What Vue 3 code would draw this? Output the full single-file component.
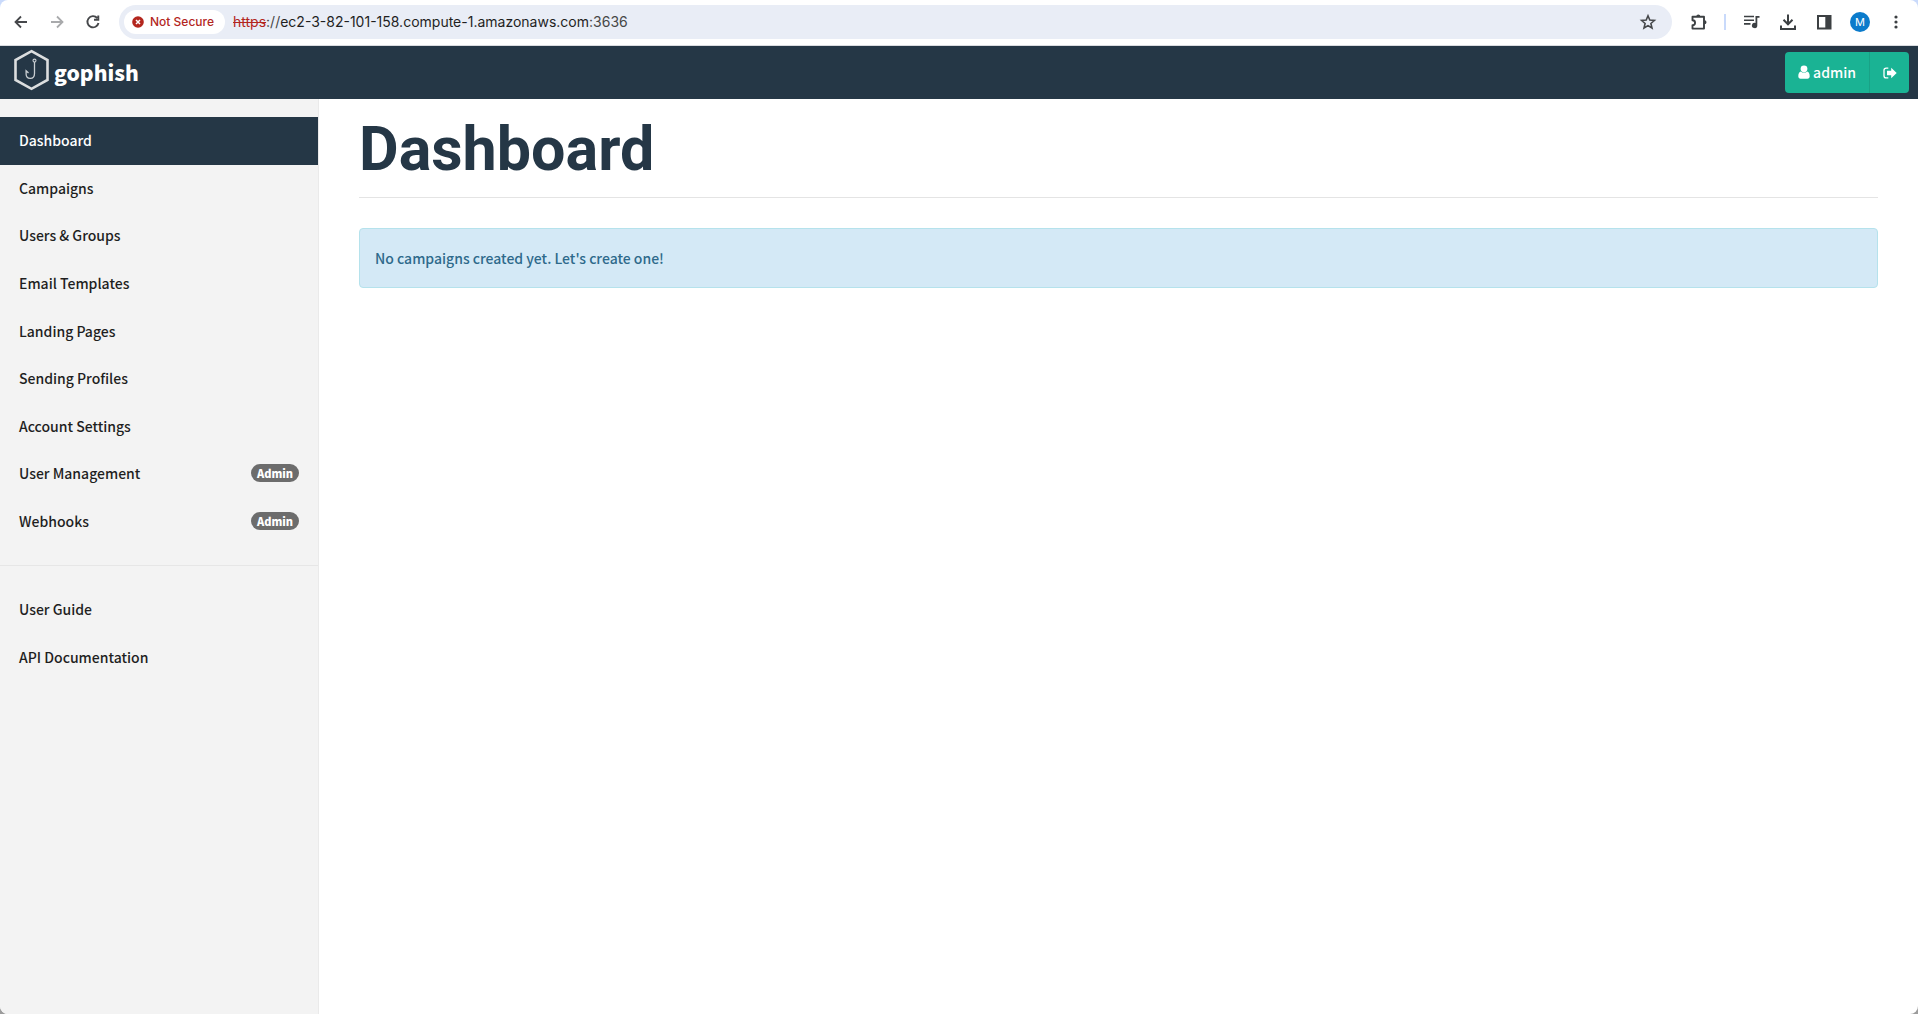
<script setup>
const mainLinks = [
  { label: 'Dashboard', active: true },
  { label: 'Campaigns' },
  { label: 'Users & Groups' },
  { label: 'Email Templates' },
  { label: 'Landing Pages' },
  { label: 'Sending Profiles' },
  { label: 'Account Settings' },
  { label: 'User Management', badge: 'Admin' },
  { label: 'Webhooks', badge: 'Admin' },
]
const helpLinks = ['User Guide', 'API Documentation']
</script>

<template>
  <div class="window">
    <header class="toolbar">
      <div class="nav-buttons">
        <button class="tool" type="button" aria-label="Back">
          <svg width="24" height="24" viewBox="0 0 24 24" fill="none" stroke="#46484b" stroke-width="1.8"><path d="M18 12H7M12 6.5L6.5 12L12 17.500" /></svg>
        </button>
        <button class="tool" type="button" aria-label="Forward">
          <svg width="24" height="24" viewBox="0 0 24 24" fill="none" stroke="#a9aaac" stroke-width="1.800"><path d="M6 12H17M12 6.500L17.500 12L12 17.500" /></svg>
        </button>
        <button class="tool" type="button" aria-label="Reload">
          <svg width="24" height="24" viewBox="0 0 24 24" fill="none" stroke="#46484b" stroke-width="1.900"><path d="M16.200 8A5.600 5.600 0 1 0 17.500 13M17.300 5.500V9.800H13" /></svg>
        </button>
      </div>
      <div class="omnibox">
        <button class="chip" type="button">
          <svg width="12" height="12" viewBox="0 0 12 12"><circle cx="6" cy="6" r="5.800" fill="#b3261e" /><path d="M4 4l4 4M8 4l-4 4" stroke="#fff" stroke-width="1.500" /></svg>
          <span>Not Secure</span>
        </button>
        <div class="url"><s>https</s>://<b>ec2-3-82-101-158.compute-1.amazonaws.com</b>:3636</div>
        <button class="tool" type="button" aria-label="Bookmark this tab">
          <svg width="24" height="24" viewBox="0 0 24 24" fill="none" stroke="#46484b" stroke-width="1.600"><path d="M12 5.800l1.800 4.300 4.600.4-3.500 3 1.100 4.500-4-2.400-4 2.400 1.100-4.500-3.500-3 4.600-.4z" /></svg>
        </button>
      </div>
      <div class="actions">
        <button class="tool" type="button" aria-label="Extensions">
          <svg width="24" height="24" viewBox="0 0 24 24"><path d="M5.500 6.700H17V18.600H5.500V15.200C8.900 15.200 8.900 10.200 5.500 10.200Z" fill="none" stroke="#3c4043" stroke-width="1.900" stroke-linejoin="round" /><path d="M9.300 6.500a2 2 0 0 1 4 0zM17.500 10.200a2 2 0 0 1 0 4z" fill="#3c4043" /></svg>
        </button>
        <span class="separator"></span>
        <button class="tool" type="button" aria-label="Media controls">
          <svg width="24" height="24" viewBox="0 0 24 24"><path d="M4 6.500h10M4 10.200h10M4 13.900h6.500" stroke="#3c4043" stroke-width="1.600" /><path d="M15.500 6H19.500V7.800H17.300V15.500A2.700 2.700 0 1 1 15.500 12.900Z" fill="#3c4043" /></svg>
        </button>
        <button class="tool" type="button" aria-label="Downloads">
          <svg width="24" height="24" viewBox="0 0 24 24" fill="none" stroke="#3c4043" stroke-width="2"><path d="M12 4.500v9.500M7.500 9.800l4.500 4.500 4.500-4.500M5 15.500v3.500h14v-3.500" /></svg>
        </button>
        <button class="tool" type="button" aria-label="Side panel">
          <svg width="24" height="24" viewBox="0 0 24 24"><rect x="6" y="6" width="12.500" height="12.500" fill="none" stroke="#3c4043" stroke-width="2" /><path d="M13.300 6h5.200v12.500h-5.200z" fill="#3c4043" /></svg>
        </button>
        <button class="avatar" type="button" aria-label="Profile">M</button>
        <button class="tool" type="button" aria-label="Menu">
          <svg width="24" height="24" viewBox="0 0 24 24" fill="#3c4043"><circle cx="12" cy="7" r="1.600" /><circle cx="12" cy="12" r="1.600" /><circle cx="12" cy="17" r="1.600" /></svg>
        </button>
      </div>
    </header>

    <nav class="navbar">
      <a class="brand" href="#">
        <svg width="36" height="42" viewBox="0 0 36 42" fill="none">
          <path d="M18.500 2.200L34.500 11V31L18.500 39.800L2.500 31V11Z" stroke="#dcdedf" stroke-width="2.600" />
          <circle cx="21.500" cy="11.600" r="1.500" stroke="#c9ced2" stroke-width="1.100" />
          <path d="M21.500 13V24.500C21.500 31 13.300 31 13.100 25V21.800L15.500 24" stroke="#c9ced2" stroke-width="1.300" />
        </svg>
        <span>gophish</span>
      </a>
      <div class="account">
        <button class="account-button user" type="button">
          <svg width="12" height="14" viewBox="0 0 12 14" fill="#fff"><circle cx="6" cy="3.800" r="3.400" /><path d="M2.900 6.400C1 6.800.3 8.800.3 11.200C.3 12.700 1.200 13.700 2.500 13.700H9.500C10.800 13.700 11.700 12.700 11.700 11.200C11.700 8.800 11 6.800 9.100 6.400C7.400 8 4.600 8 2.900 6.400Z" /></svg>
          <span>admin</span>
        </button>
        <button class="account-button logout" type="button" aria-label="Sign out">
          <svg width="14" height="12" viewBox="0 0 14 12"><path d="M5.300 1.100H3.200A2.200 2.200 0 0 0 1 3.300V8.700A2.200 2.200 0 0 0 3.200 10.900H5.300" fill="none" stroke="#fff" stroke-width="1.300" /><path d="M8.200 .8L13.700 6L8.200 11.200V8.300H4V3.700H8.200Z" fill="#fff" /></svg>
        </button>
      </div>
    </nav>

    <div class="body">
      <aside class="sidebar">
        <ul class="links main-links">
          <li v-for="link in mainLinks" :key="link.label">
            <a href="#" :class="{ active: link.active }">
              <span>{{ link.label }}</span>
              <span v-if="link.badge" class="badge">{{ link.badge }}</span>
            </a>
          </li>
        </ul>
        <hr class="rule" />
        <ul class="links help-links">
          <li v-for="label in helpLinks" :key="label"><a href="#">{{ label }}</a></li>
        </ul>
      </aside>
      <main class="content">
        <h1>Dashboard</h1>
        <div class="alert" role="alert">No campaigns created yet. Let's create one!</div>
      </main>
    </div>
  </div>
</template>

<style>
body {
  margin: 0;
  background: linear-gradient(#c9dafb 50%, #9c9c9c 50%);
}
</style>

<style scoped>
* {
  box-sizing: border-box;
}
button {
  margin: 0;
  padding: 0;
  border: 0;
  background: none;
  font: inherit;
  color: inherit;
}
svg {
  display: block;
  flex: none;
}
.window {
  display: flex;
  flex-direction: column;
  min-height: 100vh;
  overflow: hidden;
  border-radius: 8px;
  background: #fff;
  color: #1f1f1f;
  font-family: "Noto Sans CJK SC", "Noto Sans", sans-serif;
  font-size: 14px;
  font-weight: 500;
}
.toolbar {
  display: flex;
  align-items: center;
  height: 46px;
  padding: 0 10px 2px 9px;
  border-bottom: 1px solid #dadce0;
  font-family: Inter, Roboto, sans-serif;
}
.nav-buttons,
.actions {
  display: flex;
  align-items: center;
  gap: 12px;
}
.tool {
  width: 24px;
  height: 24px;
}
.omnibox {
  display: flex;
  flex: 1;
  align-items: center;
  height: 34px;
  margin: 0 15px 0 14px;
  padding: 0 12px 0 5px;
  border-radius: 17px;
  background: #e9edf6;
}
.chip {
  display: flex;
  align-items: center;
  gap: 6px;
  height: 24px;
  padding: 0 11px 0 8px;
  border-radius: 12px;
  background: #fff;
  color: #b3261e;
  font-size: 12px;
}
.url {
  flex: 1;
  margin-left: 8px;
  color: #474747;
  font-size: 14px;
  font-weight: 400;
}
.url b {
  color: #1f1f1f;
  font-weight: 400;
}
.url s {
  color: #b3261e;
}
.separator {
  width: 2px;
  height: 16px;
  margin: 0 2px 0 1px;
  background: #c9dafb;
}
.avatar {
  width: 20px;
  height: 20px;
  margin: 0 2px;
  border-radius: 50%;
  background: #0b7bcb;
  color: #fff;
  font-size: 11px;
  font-weight: 400;
}
.navbar {
  display: flex;
  align-items: center;
  justify-content: space-between;
  height: 53px;
  padding: 0 9px 0 13px;
  background: #253746;
}
.brand {
  display: flex;
  align-items: center;
  gap: 5px;
  height: 48px;
  margin-bottom: 5px;
  color: #fff;
  font-size: 21px;
  font-weight: 900;
  line-height: 24px;
  text-decoration: none;
}
.brand span {
  padding-top: 4px;
}
.account {
  display: flex;
  height: 41px;
  overflow: hidden;
  border-radius: 4px;
  color: #fff;
}
.account-button {
  display: flex;
  align-items: center;
  justify-content: center;
  background: #1ab394;
}
.user {
  gap: 3px;
  width: 85px;
  padding-bottom: 1px;
  border-right: 1px solid #19a286;
}
.logout {
  width: 39px;
}
.body {
  display: flex;
  flex: 1;
}
.sidebar {
  flex: none;
  width: 319px;
  padding-top: 18px;
  border-right: 1px solid #eaeaea;
  background: #f3f3f3;
}
.links {
  display: flex;
  flex-direction: column;
  margin: 0;
  padding: 0;
  list-style: none;
}
.links li {
  flex: 1;
}
.main-links {
  height: 428px;
}
.help-links {
  height: 95px;
}
.links a {
  display: flex;
  align-items: center;
  justify-content: space-between;
  height: 100%;
  padding: 0 19px 1px;
  color: #1f1f1f;
  text-decoration: none;
}
.links a.active {
  background: #253746;
  color: #fff;
}
.badge {
  height: 18px;
  padding: 0 6px;
  border-radius: 9px;
  background: #6c6c6c;
  color: #fff;
  font-size: 11px;
  font-weight: 900;
  line-height: 18px;
}
.rule {
  height: 1px;
  margin: 20px 0;
  border: 0;
  background: #e6e6e6;
}
.content {
  flex: 1;
  padding: 13px 40px;
}
h1 {
  margin: 0 0 30px;
  padding-bottom: 11px;
  border-bottom: 1px solid #e4e4e4;
  color: #253746;
  font-family: Roboto, sans-serif;
  font-size: 61px;
  font-weight: 700;
  line-height: 74px;
}
.alert {
  display: flex;
  align-items: center;
  height: 60px;
  padding: 0 15px 1px;
  border: 1px solid #b5e2ec;
  border-radius: 4px;
  background: #d4e9f6;
  color: #2e6a8b;
}
</style>
